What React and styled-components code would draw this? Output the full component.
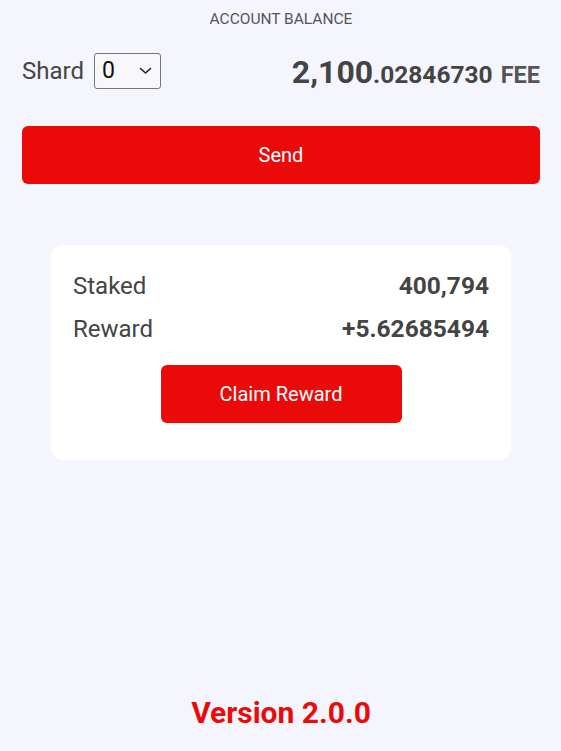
import React from "react";
import styled, { createGlobalStyle } from "styled-components";

const Global = createGlobalStyle`
  html, body { margin: 0; padding: 0; background: #f5f6fd; }
  body { font-family: Roboto, "Noto Sans", sans-serif; color: #444; }
  * { box-sizing: border-box; }
`;

const Page = styled.div`
  min-height: 100vh;
  display: flex;
  flex-direction: column;
  padding: 0 21px 0 22px;
`;

const Title = styled.div`
  margin-top: 10px;
  text-align: center;
  font-size: 15.5px;
  line-height: 18px;
  color: #555;
`;

const BalanceRow = styled.div`
  margin-top: 24px;
  display: flex;
  align-items: center;
  justify-content: space-between;
  height: 36px;
`;

const ShardGroup = styled.div`
  display: flex;
  align-items: center;
  gap: 10px;
  font-size: 24px;
  color: #444;
  margin-top: 1px;
`;

const SelectBox = styled.div`
  width: 67px;
  height: 36px;
  border: 1px solid #777;
  border-radius: 3px;
  background: #f8f8fc;
  display: flex;
  align-items: center;
  justify-content: space-between;
  padding: 0 8px 0 7px;
  font-size: 23px;
  color: #111;
`;

const Balance = styled.div`
  display: flex;
  align-items: baseline;
  font-weight: 700;
  color: #444;
  margin-top: 3px;
`;

const Whole = styled.span`
  font-size: 32px;
`;

const Fraction = styled.span`
  font-size: 24.5px;
`;

const Unit = styled.span`
  font-size: 23.5px;
  color: #555;
  margin-left: 8px;
`;

const RedButton = styled.button`
  border: none;
  border-radius: 6px;
  background: #eb0a0a;
  color: #fff;
  font-family: Roboto, "Noto Sans", sans-serif;
  font-size: 20px;
  height: 58px;
  width: ${(p) => (p.$wide ? "100%" : "241px")};
  align-self: center;
  cursor: pointer;
`;

const SendButton = styled(RedButton)`
  margin-top: 38px;
`;

const Card = styled.div`
  margin: 61px 29px 0 29px;
  background: #fff;
  border-radius: 12px;
  padding: 27px 22px 37px;
  display: flex;
  flex-direction: column;
`;

const StatRow = styled.div`
  display: flex;
  justify-content: space-between;
  align-items: center;
  font-size: 24px;
  line-height: 28px;
  & + & { margin-top: 15px; }
`;

const StatLabel = styled.span`
  color: #444;
`;

const StatValue = styled.span`
  font-weight: 700;
  font-size: 24.5px;
  color: #444;
`;

const ClaimButton = styled(RedButton)`
  margin-top: 22px;
`;

const Footer = styled.div`
  margin-top: auto;
  padding-bottom: 20px;
  text-align: center;
  color: #eb0a0a;
  font-weight: 700;
  font-size: 30px;
  line-height: 36px;
`;

const Chevron = () => (
  <svg width="13" height="8" viewBox="0 0 13 8" fill="none">
    <path d="M1.5 1.5 L6.5 6 L11.5 1.5" stroke="#222" strokeWidth="1.6" strokeLinecap="round" strokeLinejoin="round" />
  </svg>
);

export default function App() {
  return (
    <>
      <Global />
      <Page>
        <Title>ACCOUNT BALANCE</Title>
        <BalanceRow>
          <ShardGroup>
            Shard
            <SelectBox>
              <span>0</span>
              <Chevron />
            </SelectBox>
          </ShardGroup>
          <Balance>
            <Whole>2,100</Whole>
            <Fraction>.02846730</Fraction>
            <Unit>FEE</Unit>
          </Balance>
        </BalanceRow>
        <SendButton $wide>Send</SendButton>
        <Card>
          <StatRow>
            <StatLabel>Staked</StatLabel>
            <StatValue>400,794</StatValue>
          </StatRow>
          <StatRow>
            <StatLabel>Reward</StatLabel>
            <StatValue>+5.62685494</StatValue>
          </StatRow>
          <ClaimButton>Claim Reward</ClaimButton>
        </Card>
        <Footer>Version 2.0.0</Footer>
      </Page>
    </>
  );
}
